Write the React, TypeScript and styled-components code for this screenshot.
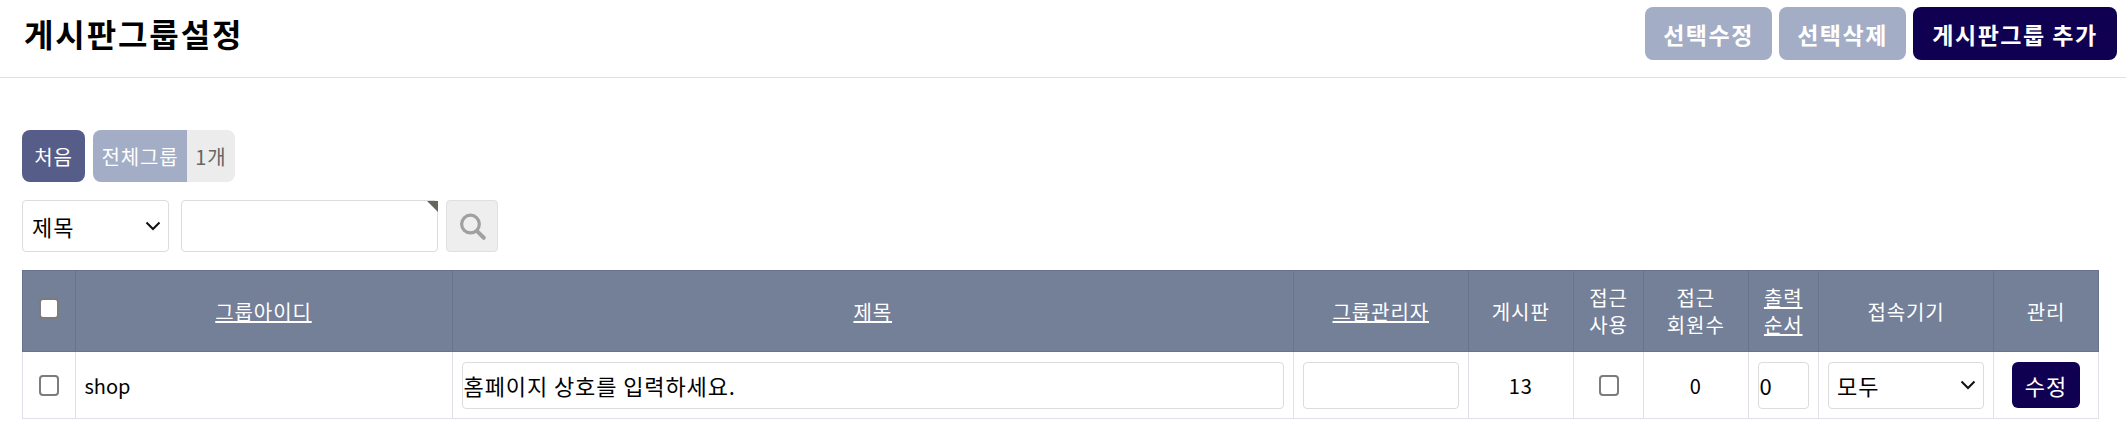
import React from 'react'
import styled, { createGlobalStyle } from 'styled-components'

const FONT = `"Noto Sans CJK KR", "Noto Sans", sans-serif`

const CHEVRON = `url("data:image/svg+xml,%3Csvg xmlns='http://www.w3.org/2000/svg' width='16' height='10' viewBox='0 0 16 10'%3E%3Cpath d='M1.5 1.5 L8 8 L14.5 1.5' fill='none' stroke='%23111' stroke-width='2'/%3E%3C/svg%3E")`

const columns = [52.5, 377, 841.5, 174.5, 105.5, 70, 104.5, 70.5, 175, 105]

export default function App() {
    return (
        <>
            <GlobalStyle />
            <Page>
                <TopBar>
                    <Title>게시판그룹설정</Title>
                    <Actions>
                        <ActionButton>선택수정</ActionButton>
                        <ActionButton>선택삭제</ActionButton>
                        <ActionButton $primary>게시판그룹 추가</ActionButton>
                    </Actions>
                </TopBar>
                <Content>
                    <Stats>
                        <FirstLink>처음</FirstLink>
                        <Counter>
                            <CounterLabel>전체그룹</CounterLabel>
                            <CounterValue>1개</CounterValue>
                        </Counter>
                    </Stats>
                    <SearchRow>
                        <SearchSelect defaultValue="title">
                            <option value="title">제목</option>
                        </SearchSelect>
                        <SearchField>
                            <SearchInput />
                            <RequiredMark />
                        </SearchField>
                        <SearchButton aria-label="검색">
                            <SearchIcon width="29" height="29" viewBox="0 0 36 36" fill="none" stroke="#a0a0a0">
                                <circle cx="15.5" cy="15" r="11" strokeWidth="4" />
                                <path d="M24 24 L32 32" strokeWidth="5" strokeLinecap="round" />
                            </SearchIcon>
                        </SearchButton>
                    </SearchRow>
                    <Table>
                        <colgroup>
                            {columns.map((width, i) => <col key={i} style={{ width }} />)}
                        </colgroup>
                        <thead>
                            <tr>
                                <Th><HeadCheck /></Th>
                                <Th><SortLink>그룹아이디</SortLink></Th>
                                <Th><SortLink>제목</SortLink></Th>
                                <Th><SortLink>그룹관리자</SortLink></Th>
                                <Th>게시판</Th>
                                <Th>접근<br />사용</Th>
                                <Th>접근<br />회원수</Th>
                                <Th><SortLink>출력<br />순서</SortLink></Th>
                                <Th>접속기기</Th>
                                <Th>관리</Th>
                            </tr>
                        </thead>
                        <tbody>
                            <tr>
                                <Td><Check /></Td>
                                <Td $left>shop</Td>
                                <Td><CellInput defaultValue="홈페이지 상호를 입력하세요." /></Td>
                                <Td><CellInput /></Td>
                                <Td>13</Td>
                                <Td><Check /></Td>
                                <Td>0</Td>
                                <Td><CellInput defaultValue="0" /></Td>
                                <Td>
                                    <CellSelect defaultValue="all">
                                        <option value="all">모두</option>
                                    </CellSelect>
                                </Td>
                                <Td><EditButton>수정</EditButton></Td>
                            </tr>
                        </tbody>
                    </Table>
                </Content>
            </Page>
        </>
    )
}

const GlobalStyle = createGlobalStyle`
    html, body {
        margin: 0;
        padding: 0;
        background: #fff;
    }
    body {
        font-family: ${FONT};
        font-size: 20px;
        letter-spacing: 0.9px;
        color: #000;
    }
`

const Page = styled.div`
    width: 2126px;
    height: 423px;
    overflow: hidden;
`

const TopBar = styled.header`
    display: flex;
    justify-content: space-between;
    align-items: flex-start;
    height: 77px;
    border-bottom: 1px solid #e0e0e0;
    padding: 0 9px 0 24px;
`

const Title = styled.h1`
    margin: 7px 0 0;
    font-size: 32px;
    line-height: 52px;
    font-weight: 700;
    letter-spacing: 1.9px;
`

const Actions = styled.div`
    display: flex;
    gap: 7px;
    padding-top: 7px;
`

const ActionButton = styled.button<{ $primary?: boolean }>`
    height: 53px;
    padding: 0;
    width: ${props => props.$primary ? '204px' : '127px'};
    border: none;
    border-radius: 8px;
    font-family: ${FONT};
    font-size: 23px;
    font-weight: 700;
    letter-spacing: 1.5px;
    color: #fff;
    background: ${props => props.$primary ? '#0f0051' : '#a3adc5'};
`

const Content = styled.main`
    padding: 52px 27px 0 22px;
`

const Stats = styled.div`
    display: flex;
    gap: 8px;
    height: 52px;
`

const FirstLink = styled.a`
    display: flex;
    align-items: center;
    justify-content: center;
    width: 63px;
    border-radius: 8px;
    background: #565d88;
    color: #fff;
`

const Counter = styled.div`
    display: flex;
    border-radius: 8px;
    overflow: hidden;
`

const CounterLabel = styled.span`
    display: flex;
    align-items: center;
    justify-content: center;
    width: 94px;
    background: #a3adc5;
    color: #fff;
`

const CounterValue = styled.span`
    display: flex;
    align-items: center;
    justify-content: center;
    width: 48px;
    background: #ececec;
    color: #666;
`

const SearchRow = styled.div`
    display: flex;
    align-items: stretch;
    height: 52px;
    margin-top: 18px;
`

const SearchSelect = styled.select`
    appearance: none;
    width: 147px;
    padding: 0 9px;
    border: 1px solid #dcdcdc;
    border-radius: 4px;
    background: #fff ${CHEVRON} no-repeat right 7px center;
    font-family: ${FONT};
    font-size: 22px;
    letter-spacing: 0.9px;
    color: #000;
`

const SearchField = styled.div`
    position: relative;
    display: flex;
    width: 257px;
    margin: 0 8px 0 12px;
`

const SearchInput = styled.input`
    width: 100%;
    box-sizing: border-box;
    border: 1px solid #dcdcdc;
    border-radius: 4px;
    background: #fff;
`

const RequiredMark = styled.span`
    position: absolute;
    top: 1px;
    right: 0;
    width: 0;
    height: 0;
    border-top: 11px solid #66665a;
    border-left: 11px solid transparent;
`

const SearchButton = styled.button`
    display: flex;
    align-items: center;
    justify-content: center;
    width: 52px;
    padding: 0;
    border: 1px solid #e0e0e0;
    border-radius: 4px;
    background: #eee;
`

const SearchIcon = styled.svg`
    filter: blur(0.4px);
`

const Table = styled.table`
    width: 2077px;
    margin-top: 18px;
    table-layout: fixed;
    border-collapse: collapse;
`

const Th = styled.th`
    height: 80px;
    padding: 0;
    border: 1px solid #687390;
    background: #747f98;
    color: #fff;
    font-weight: 400;
    line-height: 27px;
    text-align: center;
`

const SortLink = styled.a`
    color: #fff;
    text-decoration: underline;
`

const Td = styled.td<{ $left?: boolean }>`
    height: 66px;
    padding: 0 9px;
    border: 1px solid #dfe1ea;
    letter-spacing: ${props => props.$left ? '0' : '0.9px'};
    text-align: ${props => props.$left ? 'left' : 'center'};
    vertical-align: middle;
`

const Check = styled.input.attrs({ type: 'checkbox' })`
    appearance: none;
    display: block;
    box-sizing: border-box;
    width: 20px;
    height: 21px;
    margin: 0 auto;
    border: 2px solid #7c7c7c;
    border-radius: 4px;
    background: #fff;
`

const HeadCheck = styled(Check)`
    margin-top: -6px;
`

const CellInput = styled.input`
    display: block;
    width: 100%;
    height: 47px;
    box-sizing: border-box;
    padding: 0 1px;
    border: 1px solid #dcdcdc;
    border-radius: 4px;
    background: #fff;
    font-family: ${FONT};
    font-size: 22px;
    letter-spacing: 0.9px;
    color: #000;
`

const CellSelect = styled.select`
    appearance: none;
    display: block;
    width: 100%;
    height: 47px;
    padding: 0 8px;
    border: 1px solid #dcdcdc;
    border-radius: 4px;
    background: #fff ${CHEVRON} no-repeat right 7px center;
    font-family: ${FONT};
    font-size: 22px;
    letter-spacing: 0.9px;
    color: #000;
`

const EditButton = styled.button`
    width: 68px;
    height: 46px;
    padding: 0;
    border: none;
    border-radius: 6px;
    background: #0f0051;
    color: #fff;
    font-family: ${FONT};
    font-size: 22px;
    letter-spacing: 0.9px;
`
